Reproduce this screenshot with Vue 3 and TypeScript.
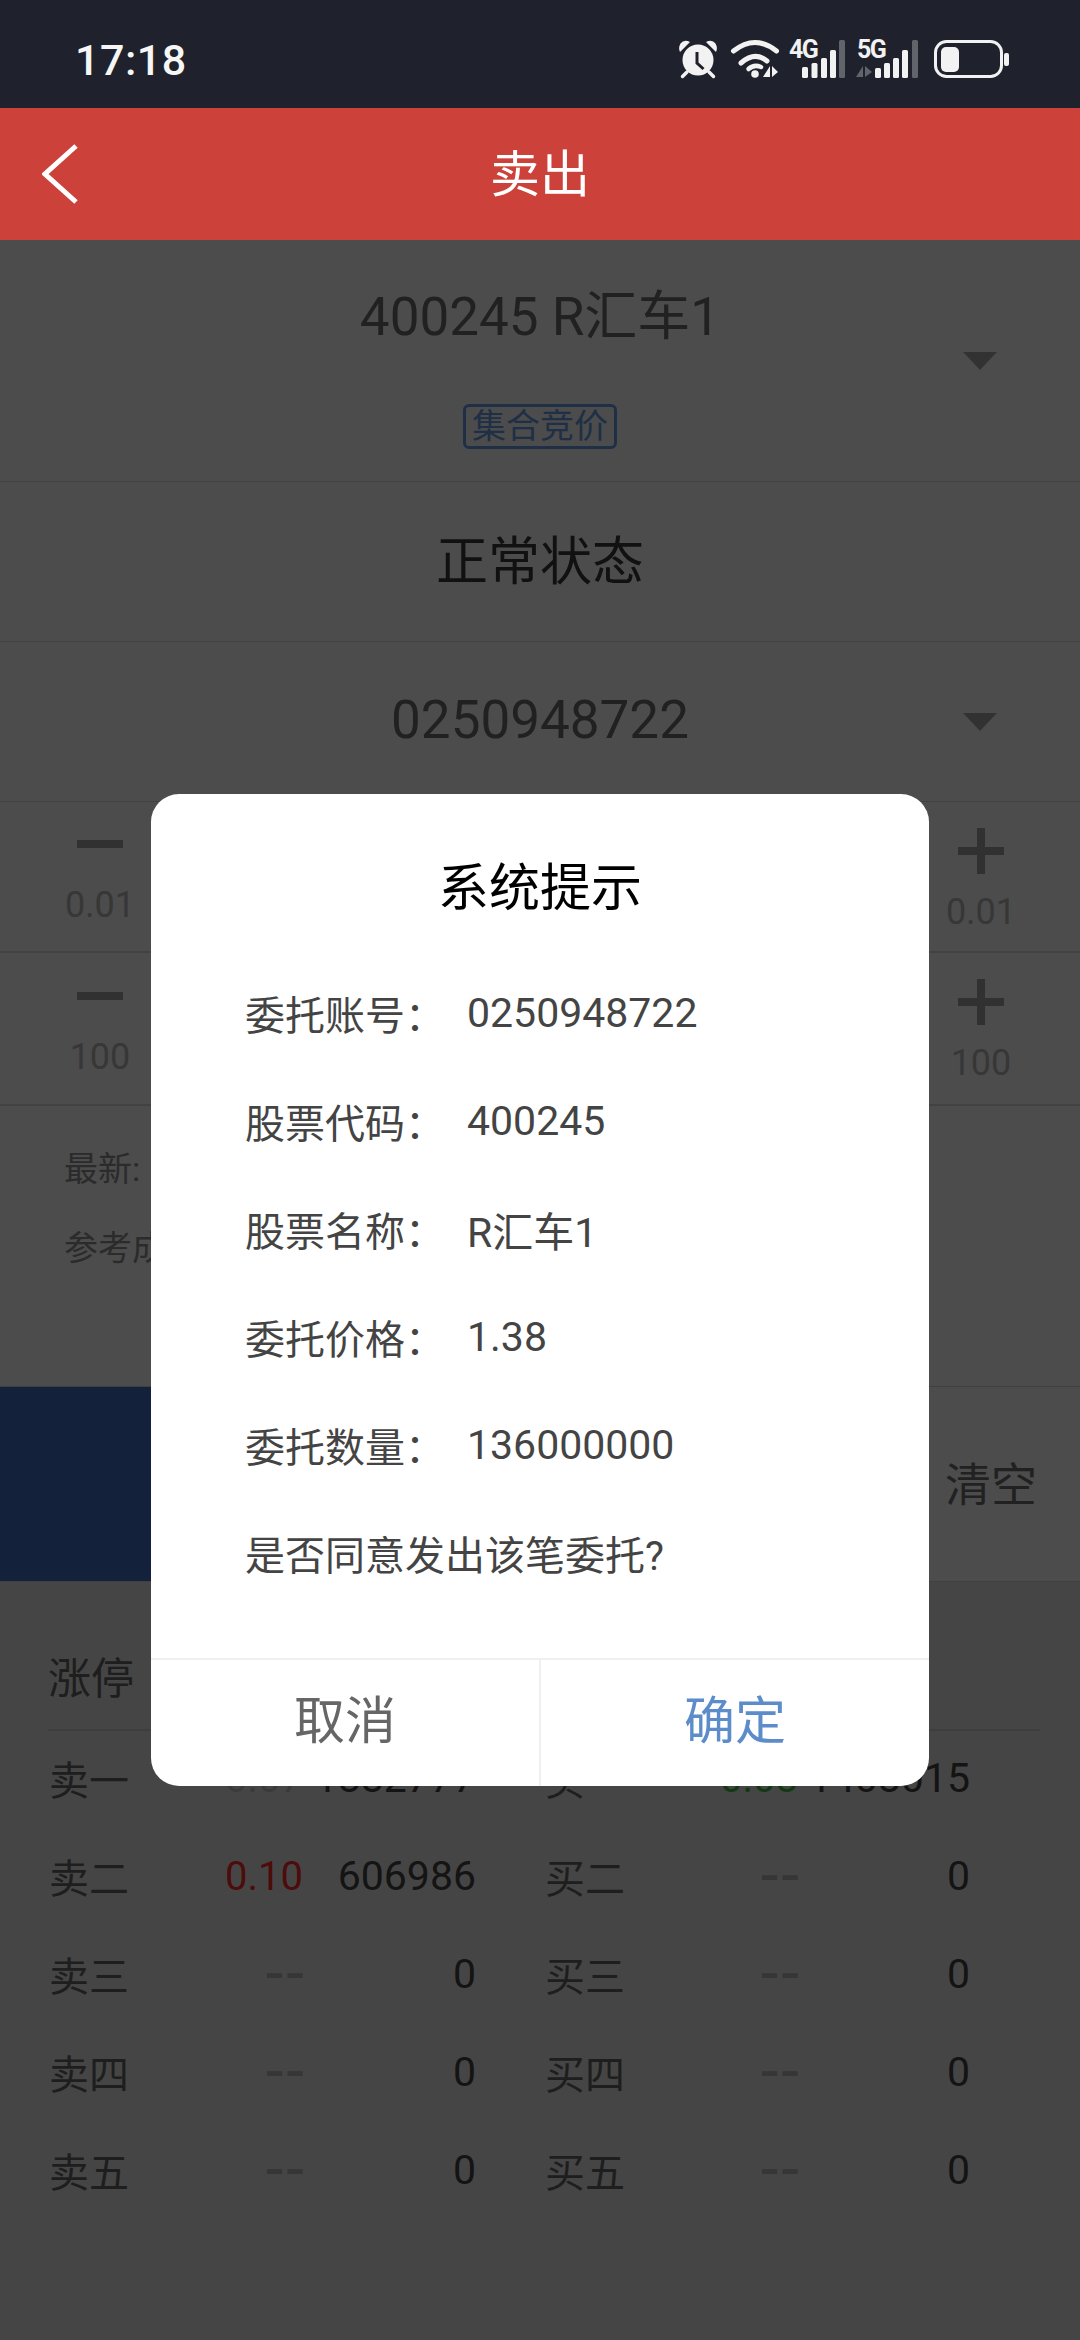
<script setup lang="ts">
interface Depth {
  sell: string
  sellPrice: string
  sellQty: string
  sellTone: string
  buy: string
  buyPrice: string
  buyQty: string
  buyTone: string
}

const confirmRows = [
  { label: '委托账号：', value: '0250948722' },
  { label: '股票代码：', value: '400245' },
  { label: '股票名称：', value: 'R汇车1' },
  { label: '委托价格：', value: '1.38' },
  { label: '委托数量：', value: '136000000' },
]

const depth: Depth[] = [
  { sell: '卖一', sellPrice: '0.07', sellQty: '1882777', sellTone: 'flat', buy: '买一', buyPrice: '0.08', buyQty: '1408015', buyTone: 'down' },
  { sell: '卖二', sellPrice: '0.10', sellQty: '606986', sellTone: 'up', buy: '买二', buyPrice: '--', buyQty: '0', buyTone: 'none' },
  { sell: '卖三', sellPrice: '--', sellQty: '0', sellTone: 'none', buy: '买三', buyPrice: '--', buyQty: '0', buyTone: 'none' },
  { sell: '卖四', sellPrice: '--', sellQty: '0', sellTone: 'none', buy: '买四', buyPrice: '--', buyQty: '0', buyTone: 'none' },
  { sell: '卖五', sellPrice: '--', sellQty: '0', sellTone: 'none', buy: '买五', buyPrice: '--', buyQty: '0', buyTone: 'none' },
]

const signalBars = [
  { x: 13, y: 27, h: 11 },
  { x: 22.5, y: 23, h: 15 },
  { x: 32, y: 18, h: 20 },
  { x: 41, y: 10, h: 28 },
]
const signalBars5g = [
  { x: 20, y: 28, h: 10 },
  { x: 29, y: 23, h: 15 },
  { x: 38, y: 18, h: 20 },
  { x: 47, y: 10, h: 28 },
]
</script>

<template>
  <div class="page">
    <div class="status-bar">
      <span class="time">17:18</span>
      <div class="status-icons">
        <svg width="38" height="38" viewBox="0 0 38 38">
          <path d="M1 12 L11 2 Q5 -1 1.5 3.5 Q-1 8 1 12Z M37 12 L27 2 Q33 -1 36.5 3.5 Q39 8 37 12Z" fill="#f2f2f2" />
          <circle cx="19" cy="20" r="15.5" fill="#f2f2f2" />
          <path d="M18 12 V23 L24.5 29" fill="none" stroke="#1f222c" stroke-width="3" />
          <path d="M8 32 L3.5 36.5 M30 32 L34.5 36.5" stroke="#f2f2f2" stroke-width="3.5" stroke-linecap="round" />
        </svg>
        <svg class="ic-wifi" width="48" height="38" viewBox="0 0 48 38">
          <path d="M2.5 11 Q24 -6 45.5 11" fill="none" stroke="#f2f2f2" stroke-width="5" stroke-linecap="round" />
          <path d="M10 23 Q24 11 36 21" fill="none" stroke="#f2f2f2" stroke-width="5" stroke-linecap="round" />
          <path d="M17.5 29 Q23 24 30 27" fill="none" stroke="#f2f2f2" stroke-width="4.5" stroke-linecap="round" />
          <circle cx="24" cy="34" r="3.8" fill="#f2f2f2" />
          <path d="M39 26 V37 H32 Z M41 26 L47 32 L41 37 Z" fill="#f2f2f2" />
        </svg>
        <svg class="ic-4g" width="58" height="38" viewBox="0 0 58 38">
          <text x="0" y="18" class="net-label">4G</text>
          <rect v-for="b in signalBars" :key="b.x" :x="b.x" :y="b.y" :width="6" :height="b.h" rx="1.5" fill="#f2f2f2" />
          <rect x="50" y="0" width="6" height="38" rx="1.5" fill="#62646b" />
        </svg>
        <svg class="ic-5g" width="64" height="38" viewBox="0 0 64 38">
          <text x="2" y="18" class="net-label">5G</text>
          <path d="M8 26 V37 H1 Z M10 26 L17 32 L10 37 Z" fill="#62646b" />
          <rect v-for="b in signalBars5g" :key="b.x" :x="b.x" :y="b.y" :width="6" :height="b.h" rx="1.5" fill="#f2f2f2" />
          <rect x="57" y="0" width="6" height="38" rx="1.5" fill="#62646b" />
        </svg>
        <svg class="ic-battery" width="76" height="38" viewBox="0 0 76 38">
          <rect x="1.5" y="1.5" width="66" height="35" rx="11" fill="none" stroke="#f2f2f2" stroke-width="3" />
          <rect x="7" y="7" width="18" height="25" rx="5" fill="#f2f2f2" />
          <rect x="70" y="13" width="5" height="13" rx="2" fill="#f2f2f2" />
        </svg>
      </div>
    </div>

    <header class="title-bar">
      <svg width="36" height="60" viewBox="0 0 36 60">
        <path d="M34 2 L3 30 L34 58" fill="none" stroke="#fff" stroke-width="5" />
      </svg>
      <h1>卖出</h1>
      <span></span>
    </header>

    <main class="main">
      <section class="picker quote">
        <span></span>
        <div class="quote-info">
          <div class="quote-name">400245 R汇车1</div>
          <div class="tag">集合竞价</div>
        </div>
        <i class="caret"></i>
      </section>

      <section class="state">正常状态</section>

      <section class="picker account">
        <span></span>
        <div class="account-no">0250948722</div>
        <i class="caret"></i>
      </section>

      <section class="stepper">
        <div class="step">
          <i class="minus"></i>
          <span>0.01</span>
        </div>
        <div class="step step-right">
          <i class="plus"></i>
          <span>0.01</span>
        </div>
      </section>

      <section class="stepper stepper-qty">
        <div class="step">
          <i class="minus"></i>
          <span>100</span>
        </div>
        <div class="step step-right">
          <i class="plus"></i>
          <span>100</span>
        </div>
      </section>

      <section class="info">
        <div>最新:</div>
        <div>参考成本:</div>
      </section>

      <section class="actions">
        <div class="btn-sell"></div>
        <button class="btn-clear">清空</button>
      </section>

      <section class="book">
        <div class="book-head">涨停</div>
        <div v-for="row in depth" :key="row.sell" class="book-row">
          <span class="lbl">{{ row.sell }}</span>
          <span class="price" :class="row.sellTone">{{ row.sellPrice }}</span>
          <span class="qty">{{ row.sellQty }}</span>
          <span class="lbl lbl-buy">{{ row.buy }}</span>
          <span class="price" :class="row.buyTone">{{ row.buyPrice }}</span>
          <span class="qty">{{ row.buyQty }}</span>
        </div>
      </section>

      <div class="scrim">
        <div class="dialog">
          <div class="dialog-body">
            <h2>系统提示</h2>
            <div v-for="r in confirmRows" :key="r.label" class="confirm-row">
              <span class="confirm-label">{{ r.label }}</span>
              <span>{{ r.value }}</span>
            </div>
            <div class="confirm-row confirm-ask">是否同意发出该笔委托?</div>
          </div>
          <div class="dialog-foot">
            <button class="cancel">取消</button>
            <button class="ok">确定</button>
          </div>
        </div>
      </div>
    </main>
  </div>
</template>

<style scoped>
.page {
  width: 1080px;
  height: 2340px;
  display: flex;
  flex-direction: column;
  overflow: hidden;
  background: #fff;
  font-family: Roboto, "Noto Sans CJK SC", sans-serif;
}

.status-bar {
  height: 108px;
  flex: none;
  display: flex;
  align-items: center;
  justify-content: space-between;
  padding: 2px 70px 0 75px;
  box-sizing: border-box;
  background: #1f222c;
  color: #f6f6f6;
}
.time {
  margin-top: 10px;
  font-size: 43px;
  font-weight: 500;
  letter-spacing: 0.5px;
}
.status-icons {
  display: flex;
  align-items: center;
  height: 38px;
  margin-top: 8px;
}
.status-icons svg {
  overflow: visible;
}
.ic-wifi {
  margin-left: 14px;
}
.ic-4g {
  margin-left: 10px;
}
.ic-5g {
  margin-left: 8px;
}
.ic-battery {
  margin-left: 15px;
}
.net-label {
  font-family: Roboto, sans-serif;
  font-size: 25px;
  font-weight: 700;
  fill: #f2f2f2;
  letter-spacing: -1.5px;
}

.title-bar {
  height: 132px;
  flex: none;
  display: grid;
  grid-template-columns: 1fr auto 1fr;
  align-items: center;
  padding-left: 42px;
  background: #cc423b;
  color: #fff;
}
.title-bar h1 {
  margin: 2px 0 0 -42px;
  font-size: 50px;
  font-weight: 400;
  line-height: 60px;
}

.main {
  position: relative;
  flex: 1;
  display: flex;
  flex-direction: column;
}

.picker {
  display: grid;
  grid-template-columns: 1fr auto 1fr;
  align-items: center;
  box-sizing: border-box;
  border-bottom: 1px solid #dcdcdc;
}
.quote {
  height: 242px;
}
.quote-info {
  display: flex;
  flex-direction: column;
  align-items: center;
  padding-top: 12px;
}
.quote-name {
  font-size: 53px;
  line-height: 64px;
  color: #717171;
}
.tag {
  margin-top: 55px;
  box-sizing: border-box;
  width: 154px;
  height: 45px;
  border: 3px solid #6a9ee6;
  border-radius: 6px;
  font-size: 34px;
  line-height: 38px;
  text-align: center;
  color: #6a9ee6;
}
.caret {
  justify-self: end;
  margin-right: 83px;
  width: 0;
  height: 0;
  border-left: 17px solid transparent;
  border-right: 17px solid transparent;
  border-top: 18px solid #a8a8a8;
}

.state {
  height: 160px;
  flex: none;
  box-sizing: border-box;
  padding-bottom: 8px;
  border-bottom: 1px solid #dcdcdc;
  display: flex;
  align-items: center;
  justify-content: center;
  font-size: 52px;
  color: #393939;
}

.account {
  height: 160px;
  flex: none;
}
.account-no {
  padding-bottom: 3px;
  font-size: 53px;
  color: #717171;
}

.stepper {
  flex: none;
  height: 151px;
  box-sizing: border-box;
  border-bottom: 2px solid #dcdcdc;
  display: flex;
  justify-content: space-between;
  padding: 0 49px 0 50px;
}
.stepper-qty {
  height: 153px;
}
.step {
  width: 100px;
  display: flex;
  flex-direction: column;
  align-items: center;
  padding-top: 19px;
  font-size: 36px;
  color: #b8b8b8;
}
.step span {
  margin-top: 16px;
  line-height: 44px;
}
.stepper-qty .step {
  padding-top: 20px;
}
.step.step-right {
  padding-top: 26px;
}
.minus,
.plus {
  position: relative;
  display: block;
  width: 46px;
  height: 46px;
}
.minus::before,
.plus::before,
.plus::after {
  content: "";
  position: absolute;
  background: #a6a6a6;
}
.minus::before,
.plus::before {
  left: 0;
  right: 0;
  top: 19px;
  height: 8px;
}
.plus::after {
  top: 0;
  bottom: 0;
  left: 19px;
  width: 8px;
}

.info {
  flex: none;
  height: 280px;
  box-sizing: border-box;
  padding: 41px 0 0 64px;
  font-size: 34px;
  line-height: 44px;
  color: #8f8f8f;
}
.info div + div {
  margin-top: 35px;
}

.actions {
  flex: none;
  height: 196px;
  display: flex;
  box-sizing: border-box;
  border-top: 1px solid #d8d8d8;
  border-bottom: 1px solid #d8d8d8;
}
.btn-sell {
  width: 500px;
  background: #4570c4;
}
.btn-clear {
  flex: 1;
  border: 0;
  padding: 0 43px 6px 0;
  background: #fff;
  color: #717171;
  font-family: inherit;
  font-size: 46px;
  text-align: right;
  cursor: pointer;
}

.book {
  flex: 1;
  background: #e8e8e8;
  padding: 0 40px 0 50px;
}
.book-head {
  box-sizing: border-box;
  height: 149px;
  padding-top: 69px;
  font-size: 43px;
  line-height: 56px;
  color: #666;
  border-bottom: 2px solid #d0d0d0;
  margin-left: -2px;
}
.book-row {
  display: grid;
  grid-template-columns: 100px 153px 173px 170px 152px 172px;
  height: 98px;
  align-items: center;
  font-size: 41px;
  color: #444;
}
.book-head + .book-row {
  margin-top: -2px;
}
.lbl {
  font-size: 40px;
  margin-left: -1px;
  color: #666;
}
.lbl-buy {
  padding-left: 70px;
}
.price,
.qty {
  text-align: right;
}
.price.up {
  font-size: 40px;
  color: #ff2a2a;
}
.price.down {
  font-size: 40px;
  color: #3cbe3c;
}
.price.flat {
  font-size: 40px;
  color: #c4c4c4;
}
.price.none {
  font-size: 64px;
  line-height: 64px;
  letter-spacing: 3px;
  margin-right: -4px;
  color: #b4b4b4;
}

.scrim {
  position: absolute;
  inset: 0;
  display: flex;
  align-items: center;
  justify-content: center;
  background: rgba(0, 0, 0, 0.7);
}
.dialog {
  width: 778px;
  height: 992px;
  display: flex;
  flex-direction: column;
  background: #fff;
  border-radius: 28px;
  overflow: hidden;
}
.dialog-body {
  flex: 1;
  padding: 0 0 0 94px;
}
.dialog-body h2 {
  margin: 0 0 0 -94px;
  height: 165px;
  padding-top: 58px;
  box-sizing: border-box;
  text-align: center;
  font-size: 51px;
  font-weight: 400;
  line-height: 74px;
  color: #000;
}
.confirm-row {
  height: 108px;
  display: flex;
  align-items: center;
  font-size: 41px;
  color: #444;
}
.confirm-label {
  width: 222px;
  flex: none;
  font-size: 40px;
}
.confirm-ask {
  font-size: 40px;
}
.dialog-foot {
  flex: none;
  height: 126px;
  display: grid;
  grid-template-columns: 390px 1fr;
  border-top: 2px solid #f0f0f0;
}
.dialog-foot button {
  border: 0;
  background: none;
  padding: 0 0 12px;
  font-family: inherit;
  font-size: 51px;
  cursor: pointer;
}
.dialog-foot .cancel {
  color: #666;
  border-right: 2px solid #f0f0f0;
}
.dialog-foot .ok {
  color: #5d8ccb;
}
</style>
